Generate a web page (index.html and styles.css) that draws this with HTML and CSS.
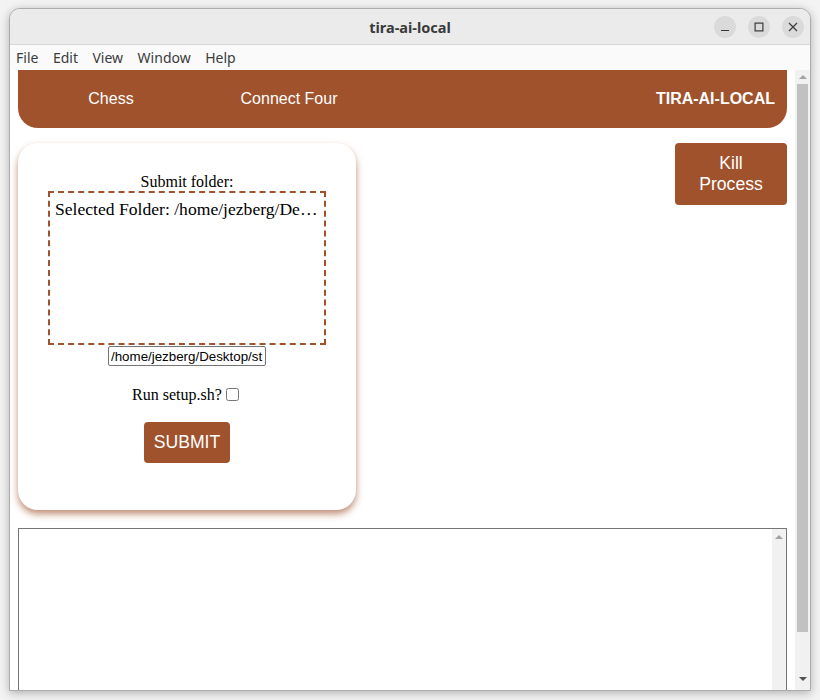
FILE: index.html
```html
<!DOCTYPE html>
<html lang="en">
<head>
<meta charset="utf-8">
<title>tira-ai-local</title>
<link rel="stylesheet" href="styles.css">
</head>
<body>
<div class="window">
  <div class="titlebar">
    <span class="spacer"></span>
    <span class="title">tira-ai-local</span>
    <div class="controls">
      <span class="ctl"><svg width="10" height="10" viewBox="0 0 10 10"><path d="M1 8.5H9" stroke="#3a3a3a" stroke-width="1.2"/></svg></span>
      <span class="ctl"><svg width="10" height="10" viewBox="0 0 10 10"><rect x="1.1" y="1.1" width="7.8" height="7.8" fill="none" stroke="#3a3a3a" stroke-width="1.2"/></svg></span>
      <span class="ctl"><svg width="10" height="10" viewBox="0 0 10 10"><path d="M1 1L9 9M9 1L1 9" stroke="#3a3a3a" stroke-width="1.2"/></svg></span>
    </div>
  </div>
  <div class="menubar">
    <span>File</span><span>Edit</span><span>View</span><span>Window</span><span>Help</span>
  </div>
  <div class="webview">
    <div class="page">
      <nav class="navbar">
        <a class="nav-link">Chess</a>
        <a class="nav-link">Connect Four</a>
        <span class="brand">TIRA-AI-LOCAL</span>
      </nav>
      <div class="main-row">
        <div class="card">
          <div class="label">Submit folder:</div>
          <div class="dropzone">
            <p class="selected">Selected Folder: /home/jezberg/Desktop/stuff/tira-ai-local</p>
          </div>
          <input class="path" type="text" value="/home/jezberg/Desktop/stuff/tira-ai-local">
          <div class="setup">Run setup.sh? <input class="check" type="checkbox"></div>
          <button class="submit">SUBMIT</button>
        </div>
        <button class="kill">Kill Process</button>
      </div>
      <div class="console">
        <textarea class="output"></textarea>
        <div class="tscroll"><span class="arrow-up light"></span></div>
      </div>
    </div>
    <div class="vscroll">
      <span class="arrow-up light"></span>
      <div class="thumb"></div>
      <span class="arrow-down"></span>
    </div>
  </div>
</div>
</body>
</html>
```
FILE: styles.css
```css
html, body {
  margin: 0;
  padding: 0;
}
body {
  background: #f3f3f3;
  padding: 8px 0 0 9px;
  height: 700px;
  box-sizing: border-box;
  overflow: hidden;
}
.window {
  width: 802px;
  height: 683px;
  box-sizing: border-box;
  border: 1px solid #acacac;
  border-radius: 11px 11px 0 0;
  box-shadow: 0 2px 10px rgba(0,0,0,0.28);
  background: #fff;
  display: flex;
  flex-direction: column;
  overflow: hidden;
}
.titlebar {
  height: 36px;
  box-sizing: border-box;
  background: #ebebeb;
  border-bottom: 1px solid #d8d8d8;
  display: grid;
  grid-template-columns: 1fr auto 1fr;
  align-items: center;
}
.title {
  font-family: "Noto Sans", "DejaVu Sans", sans-serif;
  font-weight: bold;
  font-size: 14.5px;
  color: #3a3a3a;
}
.controls {
  justify-self: end;
  display: flex;
  gap: 12px;
  padding-right: 6px;
}
.ctl {
  width: 22px;
  height: 22px;
  border-radius: 50%;
  background: #dadada;
  display: flex;
  align-items: center;
  justify-content: center;
}
.menubar {
  height: 25px;
  background: #fafafa;
  display: flex;
  align-items: center;
  gap: 14.5px;
  padding-left: 6px;
  font-family: "Noto Sans", "DejaVu Sans", sans-serif;
  font-size: 14px;
  color: #3c3c3c;
}
.webview {
  flex: 1;
  display: flex;
  min-height: 0;
}
.page {
  flex: 1;
  padding: 0 8px;
  overflow: hidden;
  background: #fff;
}
.navbar {
  height: 58px;
  background: #a0522d;
  border-radius: 0 0 20px 20px;
  display: flex;
  align-items: center;
  padding: 0 12px 0 4px;
  font-family: "Liberation Sans", Arial, sans-serif;
  font-size: 16px;
  color: #fff;
}
.nav-link {
  width: 178px;
  text-align: center;
}
.brand {
  margin-left: auto;
  font-weight: bold;
}
.main-row {
  display: flex;
  justify-content: space-between;
  align-items: flex-start;
  margin-top: 15px;
}
.card {
  width: 338px;
  height: 367px;
  box-sizing: border-box;
  background: #fff;
  border-radius: 20px;
  box-shadow: 0 4px 7px rgba(160,82,45,0.65);
  padding-top: 29px;
  display: flex;
  flex-direction: column;
  align-items: center;
  font-family: "Liberation Serif", "Times New Roman", serif;
  font-size: 16px;
}
.label {
  line-height: 19px;
}
.dropzone {
  width: 278px;
  height: 154px;
  box-sizing: border-box;
  border: 2px dashed #a0522d;
  padding: 6px 5px 0 5px;
}
.selected {
  margin: 0;
  font-size: 17.6px;
  line-height: 20px;
  white-space: nowrap;
  overflow: hidden;
  text-overflow: ellipsis;
}
.path {
  width: 158px;
  height: 20px;
  box-sizing: border-box;
  margin: 1px 0 0 0;
  padding: 1px 2px;
  border: 1px solid #767676;
  border-radius: 2px;
  font-family: "Liberation Sans", Arial, sans-serif;
  font-size: 13.33px;
  color: #000;
}
.setup {
  margin-top: 19px;
  line-height: 19px;
  display: flex;
  align-items: center;
}
.check {
  width: 13px;
  height: 13px;
  margin: 0 3px 0 4px;
}
.submit {
  margin-top: 18px;
  background: #a0522d;
  color: #fff;
  border: none;
  border-radius: 4px;
  padding: 10px 10px;
  font-family: "Liberation Sans", Arial, sans-serif;
  font-size: 17.6px;
  line-height: 21px;
}
.kill {
  width: 112px;
  height: 62px;
  box-sizing: border-box;
  background: #a0522d;
  color: #fff;
  border: none;
  border-radius: 4px;
  padding: 10px 12px;
  font-family: "Liberation Sans", Arial, sans-serif;
  font-size: 17.6px;
  line-height: 21px;
}
.console {
  margin-top: 18px;
  height: 200px;
  border: 1px solid #767676;
  display: flex;
}
.output {
  flex: 1;
  border: none;
  resize: none;
  outline: none;
  margin: 0;
  padding: 2px;
  overflow: hidden;
}
.tscroll {
  width: 14px;
  background: #f1f1f1;
  display: flex;
  flex-direction: column;
  align-items: center;
  padding-top: 6px;
}
.vscroll {
  width: 15px;
  background: #f1f1f1;
  display: flex;
  flex-direction: column;
  align-items: center;
  padding-top: 5px;
  box-sizing: border-box;
}
.thumb {
  width: 11px;
  height: 548px;
  background: #c1c1c1;
  margin-top: 5px;
}
.arrow-up {
  width: 0;
  height: 0;
  border-left: 4px solid transparent;
  border-right: 4px solid transparent;
  border-bottom: 4px solid #505050;
}
.arrow-up.light {
  border-bottom-color: #a3a3a3;
}
.arrow-down {
  width: 0;
  height: 0;
  margin-top: 45px;
  border-left: 4px solid transparent;
  border-right: 4px solid transparent;
  border-top: 4px solid #505050;
}
```
